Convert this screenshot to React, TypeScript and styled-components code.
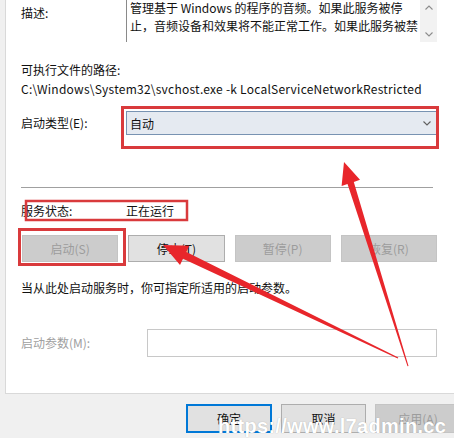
import React from "react";
import styled, { createGlobalStyle } from "styled-components";

const Global = createGlobalStyle`
  html, body { margin: 0; padding: 0; background: #f0f0f0; }
  body { font-family: "Noto Sans CJK SC", "Noto Sans", sans-serif; font-size: 12px; color: #000; }
`;

const Viewport = styled.div`
  position: relative;
  width: 454px;
  height: 438px;
  overflow: hidden;
  background: #f0f0f0;
`;

const Dialog = styled.div`
  width: 480px;
  display: flex;
  flex-direction: column;
`;

const Panel = styled.div`
  margin-left: 5px;
  height: 394px;
  box-sizing: border-box;
  background: #fff;
  border-left: 1px solid #d9d9d9;
  border-bottom: 1px solid #d9d9d9;
  padding-left: 15px;
  display: flex;
  flex-direction: column;
`;

const Text = styled.div<{ $muted?: boolean; $mt?: number; $ls?: number }>`
  font-size: 12px;
  line-height: 18px;
  white-space: nowrap;
  color: ${(p) => (p.$muted ? "#a0a0a0" : "#111")};
  margin-top: ${(p) => p.$mt ?? 0}px;
  letter-spacing: ${(p) => p.$ls ?? 0}px;
`;

const DescRow = styled.div`
  display: grid;
  grid-template-columns: 105px 311px;
  height: 42px;
`;

const DescLabel = styled(Text)`
  padding-top: 4px;
`;

const DescBox = styled.div`
  display: flex;
  border-left: 1px solid #8a8a8a;
  height: 42px;
  overflow: hidden;
`;

const DescText = styled.div`
  flex: 1;
  padding-left: 3px;
  margin-top: -1px;
  font-size: 12px;
  line-height: 18px;
  color: #111;
  white-space: nowrap;
`;

const ScrollBar = styled.div`
  width: 17px;
  background: #f2f2f2;
  display: flex;
  flex-direction: column;
  justify-content: space-between;
  align-items: center;
  padding: 5px 0 5px;
  box-sizing: border-box;
`;

const Chevron = ({ up, color = "#8c8c8c", w = 8 }: { up?: boolean; color?: string; w?: number }) => (
  <svg width={w} height={w / 2 + 1} viewBox="0 0 8 5" style={{ display: "block" }}>
    <path d={up ? "M0.5 4.5 L4 1 L7.5 4.5" : "M0.5 0.5 L4 4 L7.5 0.5"} fill="none" stroke={color} strokeWidth="1.1" />
  </svg>
);

const FieldRow = styled.div<{ $label: number; $mt: number }>`
  display: grid;
  grid-template-columns: ${(p) => p.$label}px 1fr;
  align-items: center;
  margin-top: ${(p) => p.$mt}px;
  width: 416px;
`;

const Combo = styled.div`
  height: 24px;
  box-sizing: border-box;
  border: 1px solid #7893b2;
  background: #e5eaf1;
  display: flex;
  align-items: center;
  justify-content: space-between;
  padding: 0 5px 0 3px;
  font-size: 12px;
  color: #111;
`;

const Separator = styled.div`
  margin-top: 52px;
  width: 412px;
  height: 1px;
  background: #a0a0a0;
`;

const ButtonGrid = styled.div`
  margin-top: 15px;
  margin-left: 1px;
  width: 415px;
  display: grid;
  grid-template-columns: repeat(4, 1fr);
  column-gap: 10px;
`;

const Btn = styled.div<{ $disabled?: boolean; $default?: boolean }>`
  height: 27px;
  box-sizing: border-box;
  display: flex;
  align-items: center;
  justify-content: center;
  font-size: 12px;
  background: ${(p) => (p.$disabled ? "#cccccc" : "#e1e1e1")};
  color: ${(p) => (p.$disabled ? "#9c9c9c" : "#111")};
  border: ${(p) =>
    p.$default ? "2px solid #0078d7" : p.$disabled ? "1px solid #c4c4c4" : "1px solid #adadad"};
`;

const Input = styled.div`
  height: 28px;
  box-sizing: border-box;
  border: 1px solid #c8c8c8;
  background: #fff;
`;

const Footer = styled.div`
  margin-top: 10px;
  padding-left: 186px;
  display: grid;
  grid-template-columns: 86px 85px 86px;
  column-gap: 9px;
`;

const FooterBtn = styled(Btn)`
  height: 29px;
`;

const Overlay = styled.svg`
  position: absolute;
  left: 0;
  top: 0;
  pointer-events: none;
`;

const Watermark = styled.div`
  position: absolute;
  left: 218px;
  top: 414px;
  font-family: "Liberation Sans", Arial, sans-serif;
  font-weight: bold;
  font-size: 20px;
  line-height: 24px;
  letter-spacing: 0.3px;
  color: #ffffff;
  text-shadow: 0 0 1px rgba(120, 120, 120, 0.6);
  white-space: nowrap;
  pointer-events: none;
`;

const RED = "#d93a3c";
const ARROW = "#e8262b";

export default function App() {
  return (
    <>
      <Global />
      <Viewport>
        <Dialog>
          <Panel>
            <DescRow>
              <DescLabel>描述:</DescLabel>
              <DescBox>
                <DescText>
                  管理基于 Windows 的程序的音频。如果此服务被停
                  <br />
                  止，音频设备和效果将不能正常工作。如果此服务被禁
                </DescText>
                <ScrollBar>
                  <Chevron up />
                  <Chevron />
                </ScrollBar>
              </DescBox>
            </DescRow>
            <Text $mt={19}>可执行文件的路径:</Text>
            <Text $mt={1} $ls={0.24}>
              C:\Windows\System32\svchost.exe -k LocalServiceNetworkRestricted
            </Text>
            <FieldRow $label={105} $mt={13}>
              <Text>启动类型(E):</Text>
              <Combo>
                <span>自动</span>
                <Chevron color="#606060" />
              </Combo>
            </FieldRow>
            <Separator />
            <FieldRow $label={105} $mt={14}>
              <Text>服务状态:</Text>
              <Text>正在运行</Text>
            </FieldRow>
            <ButtonGrid>
              <Btn $disabled>启动(S)</Btn>
              <Btn>停止(T)</Btn>
              <Btn $disabled>暂停(P)</Btn>
              <Btn $disabled>恢复(R)</Btn>
            </ButtonGrid>
            <Text $mt={17}>当从此处启动服务时，你可指定所适用的启动参数。</Text>
            <FieldRow $label={126} $mt={32}>
              <Text $muted>启动参数(M):</Text>
              <Input />
            </FieldRow>
          </Panel>
          <Footer>
            <FooterBtn $default>确定</FooterBtn>
            <FooterBtn>取消</FooterBtn>
            <FooterBtn $disabled>应用(A)</FooterBtn>
          </Footer>
        </Dialog>

        <Overlay width={454} height={438} viewBox="0 0 454 438">
          <rect x={122.5} y={107.5} width={315} height={40} fill="none" stroke={RED} strokeWidth={3} />
          <rect x={26} y={201} width={161} height={19} fill="none" stroke={RED} strokeWidth={2.5} />
          <rect x={19.5} y={229.5} width={105} height={35} fill="none" stroke={RED} strokeWidth={3} />
          <polygon
            fill={ARROW}
            points="408.5,365.9 353.8,182 360,179.8 344,162 341.6,186 347.5,184 407.5,366.2"
          />
          <polygon
            fill={ARROW}
            points="398.3,357.5 186.4,252 189.3,245.8 163,245 180,265 183,258.8 397.7,358.5"
          />
        </Overlay>
        <Watermark>https://www.l7admin.cc</Watermark>
      </Viewport>
    </>
  );
}
